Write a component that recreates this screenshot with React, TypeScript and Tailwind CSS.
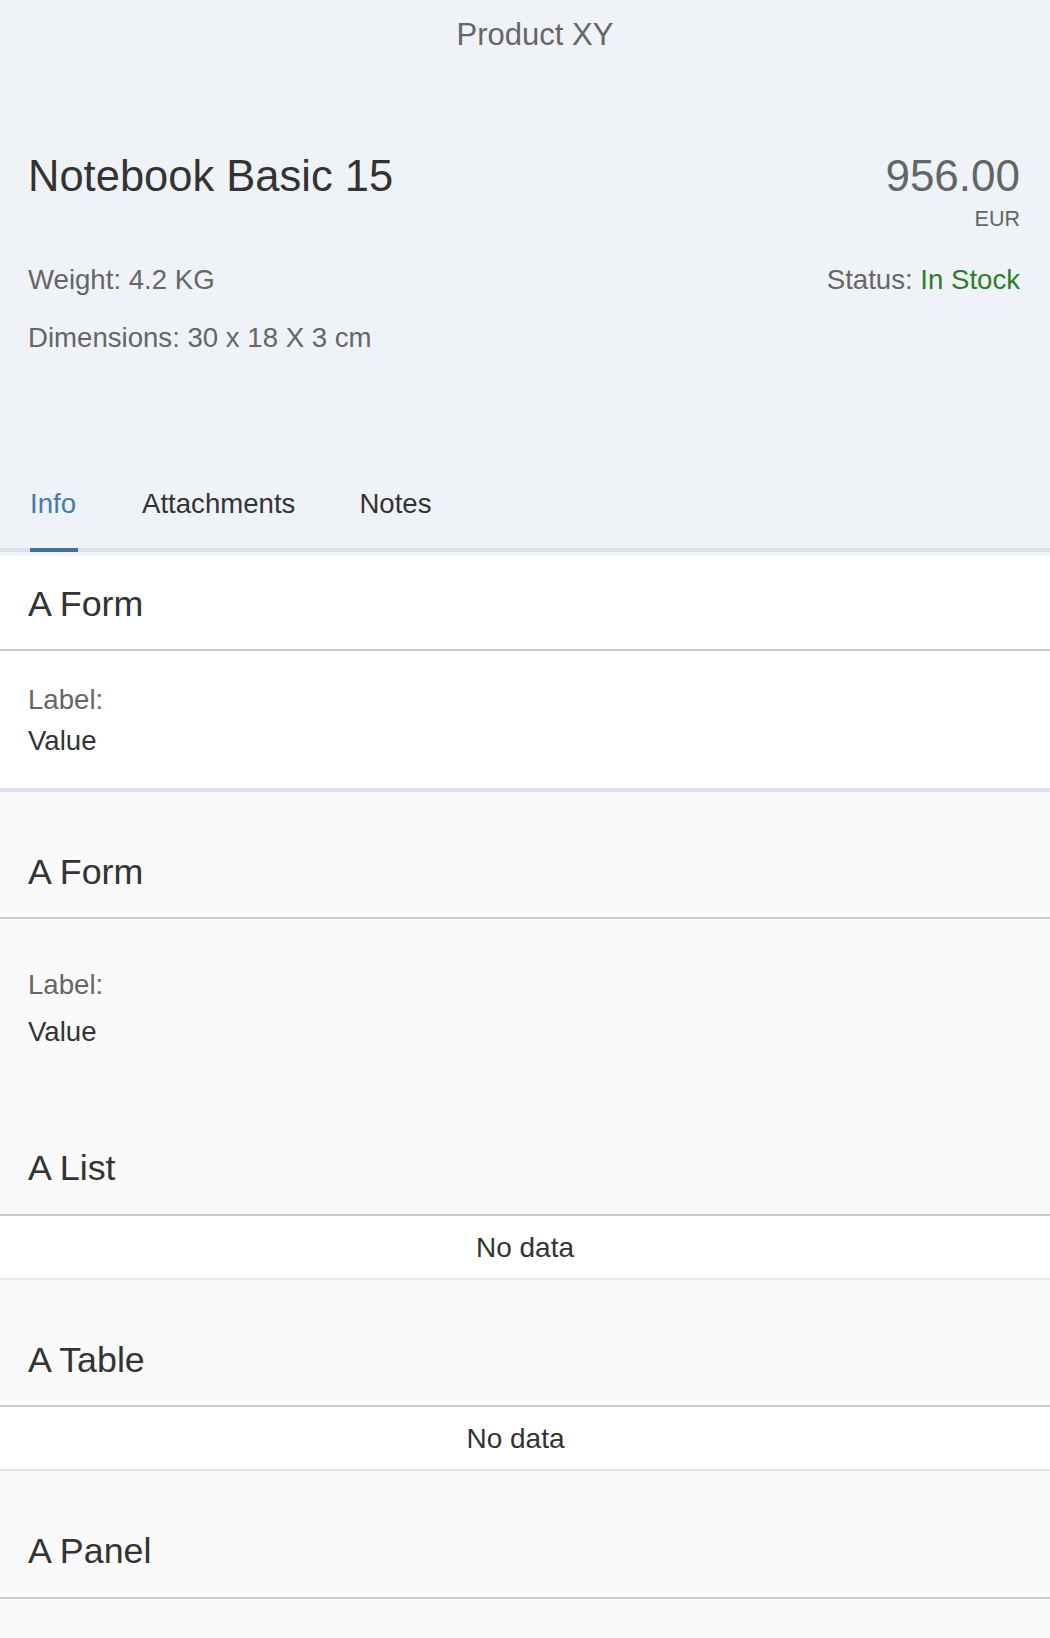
const tabs = [
  { label: "Info", active: true },
  { label: "Attachments", active: false },
  { label: "Notes", active: false },
];

function SectionTitle({ title, last }: { title: string; last?: boolean }) {
  return (
    <div
      className={`px-[28px] pt-[60px] border-b-2 border-[#cccccc] ${last ? "pb-[26px]" : "pb-[25px]"}`}
    >
      <h2 className="text-[35.8px] leading-[40px] text-[#333333]">{title}</h2>
    </div>
  );
}

function NoData({ offset }: { offset?: boolean }) {
  return (
    <div
      className={`bg-white border-b-2 border-[#e5e5e5] pt-[16px] pb-[14px] flex justify-center ${offset ? "pr-[19px]" : ""}`}
    >
      <span className="text-[28px] leading-[32px] text-[#333333]">No data</span>
    </div>
  );
}

export default function App() {
  return (
    <div
      className="w-full min-h-[1638px] bg-[#fafafa]"
      style={{ fontFamily: '"Liberation Sans", Arial, sans-serif' }}
    >
      {/* Header */}
      <header className="bg-[#eff3f8]">
        <div className="h-[69px] flex items-center justify-center pl-[20px]">
          <span className="text-[31px] leading-[36px] text-[#666666]">Product XY</span>
        </div>

        <div className="pl-[28px] pr-[30px] pt-[82px]">
          <div className="flex justify-between items-start">
            <h1 className="text-[43.5px] leading-[50px] text-[#333333]">Notebook Basic 15</h1>
            <div className="flex flex-col items-end">
              <span className="text-[44px] leading-[50px] text-[#5e686b]">956.00</span>
              <span className="mt-[6px] text-[21.5px] leading-[24px] text-[#5e686b]">EUR</span>
            </div>
          </div>

          <div className="mt-[33px] flex justify-between items-start">
            <div className="flex flex-col gap-[26px] text-[27.6px] leading-[32px] text-[#666666]">
              <span>Weight: 4.2 KG</span>
              <span>Dimensions: 30 x 18 X 3 cm</span>
            </div>
            <span className="text-[27.6px] leading-[32px] text-[#666666]">
              Status: <span className="text-[#2b7c2b]">In Stock</span>
            </span>
          </div>
        </div>

        {/* Tabs */}
        <div className="mt-[134px] pb-[4px]">
          <div className="flex gap-[64px] pl-[30px] pr-[28px] border-b-4 border-[#d8e2ee]">
            {tabs.map((t) => (
              <div
                key={t.label}
                className={`-mb-[4px] pb-[28px] border-b-4 text-[27.6px] leading-[32px] ${
                  t.active
                    ? "min-w-[48px] border-[#42709c] text-[#427cac]"
                    : "border-transparent text-[#333333]"
                }`}
              >
                {t.label}
              </div>
            ))}
          </div>
        </div>
      </header>

      {/* First section */}
      <section className="bg-white border-b-4 border-[#d8e2ee]">
        <div className="px-[28px] pt-[28px] pb-[25px] border-b-2 border-[#cccccc]">
          <h2 className="text-[35.8px] leading-[40px] text-[#333333]">A Form</h2>
        </div>
        <div className="px-[28px] pt-[33px] pb-[31px] text-[27.6px] leading-[32px]">
          <div className="text-[#666666]">Label:</div>
          <div className="mt-[9px] text-[#333333]">Value</div>
        </div>
      </section>

      {/* Second form */}
      <section>
        <SectionTitle title="A Form" />
        <div className="px-[28px] pt-[50px] text-[27.6px] leading-[32px]">
          <div className="text-[#666666]">Label:</div>
          <div className="mt-[15px] text-[#333333]">Value</div>
        </div>
      </section>

      {/* List */}
      <section className="mt-[40px]">
        <SectionTitle title="A List" last />
        <NoData />
      </section>

      {/* Table */}
      <section>
        <SectionTitle title="A Table" />
        <NoData offset />
      </section>

      {/* Panel */}
      <section>
        <SectionTitle title="A Panel" last />
      </section>
    </div>
  );
}
